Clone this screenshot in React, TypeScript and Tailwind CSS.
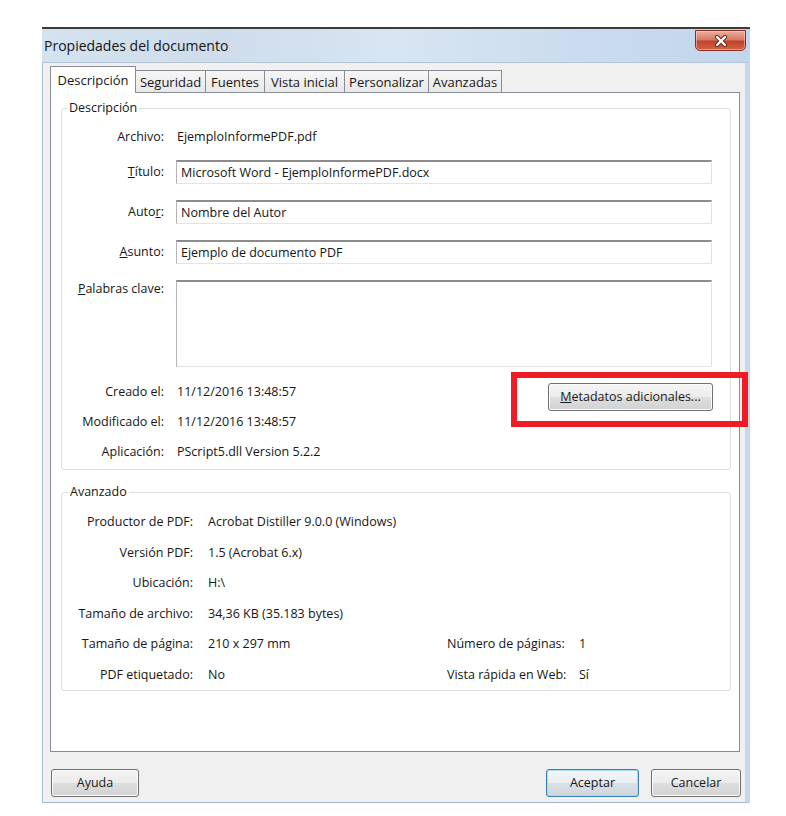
import React from "react";

const btn =
  "h-[28px] rounded-[3px] border border-[#707070] bg-[linear-gradient(to_bottom,#f4f4f4_0%,#ececec_48%,#dedede_52%,#d2d2d2_100%)] shadow-[inset_0_0_0_1px_#fbfbfb] flex items-center justify-center text-[#1a1a1a]";

function TextBox({ children, tall }: { children?: React.ReactNode; tall?: boolean }) {
  return (
    <div
      className={
        "flex-1 mr-[18px] border-t-2 border-t-[#8c8c8c] border-l border-l-[#b4b4b4] border-r border-r-[#e2e2e2] border-b border-b-[#e4e4e4] bg-white pl-[4px] " +
        (tall ? "h-[87px]" : "h-[24px] flex items-center")
      }
    >
      {children}
    </div>
  );
}

function AdvRow({
  label,
  value,
  rLabel,
  rValue,
}: {
  label: string;
  value: string;
  rLabel?: string;
  rValue?: string;
}) {
  return (
    <div className="h-[30.5px] flex items-center">
      <div className="w-[131px] text-right shrink-0">{label}</div>
      <div className="w-[254px] pl-[15px] shrink-0">{value}</div>
      {rLabel && <div className="w-[132px] shrink-0">{rLabel}</div>}
      {rValue && <div>{rValue}</div>}
    </div>
  );
}

export default function App() {
  const tabs = [
    { t: "Seguridad", w: "w-[70px]" },
    { t: "Fuentes", w: "w-[59px]" },
    { t: "Vista inicial", w: "w-[80px]" },
    { t: "Personalizar", w: "w-[84px]" },
    { t: "Avanzadas", w: "w-[73px]" },
  ];
  return (
    <div className="relative w-[786px] h-[816px] bg-white pt-[27px] pl-[42px] overflow-hidden font-['Open_Sans','Noto_Sans',sans-serif] text-[12.5px] leading-[16px] text-[#161616]">
      <div className="w-[708px]">
        {/* Title bar */}
        <div className="h-[35px] border-t-2 border-t-[#3c3c3c] bg-[linear-gradient(to_right,#d5e2ef_0%,#cedcec_25%,#d8e5f2_50%,#cbdcee_75%,#c1d6ec_100%)] flex justify-between items-start">
          <div className="h-[33px] flex items-center pl-[2px] text-[14px] text-[#151515]">
            Propiedades del documento
          </div>
          <div className="mt-[1px] mr-[4px] w-[51px] h-[21px] rounded-b-[5px] border border-[#83301f] bg-[linear-gradient(to_bottom,#eab0a2_0%,#d97a63_45%,#c2432a_55%,#d26247_100%)] shadow-[inset_0_0_0_1px_rgba(255,220,210,0.5)] flex items-center justify-center">
            <svg width="14" height="12" viewBox="0 0 14 12">
              <path d="M3 2 L11 10 M11 2 L3 10" stroke="#6b2418" strokeWidth="4.2" strokeLinecap="round" />
              <path d="M3 2 L11 10 M11 2 L3 10" stroke="#ffffff" strokeWidth="2.4" strokeLinecap="round" />
            </svg>
          </div>
        </div>

        {/* Client */}
        <div className="bg-[#f0f0f0] border-t border-t-[#b3c4d6] border-l border-l-[#a9bfd6] border-r-[5px] border-r-[#c3d7ed] border-b border-b-[#9fb6cf] pb-[5px]">
          {/* Tabs */}
          <div className="flex items-end pl-[7px] pt-[3px] text-[13px]">
            <div className="relative z-10 -mb-px w-[86px] h-[27px] bg-white border border-b-0 border-[#898c95] flex items-center justify-center">
              Descripción
            </div>
            {tabs.map((tb) => (
              <div
                key={tb.t}
                className={
                  tb.w +
                  " h-[22px] border-t border-r border-[#898c95] bg-[linear-gradient(to_bottom,#f6f6f6,#e8e8e8)] flex items-center justify-center"
                }
              >
                {tb.t}
              </div>
            ))}
          </div>

          {/* Panel */}
          <div className="ml-[7px] mr-[5px] h-[660px] border border-[#898c95] bg-white pt-[15px]">
            {/* Group Descripción */}
            <div className="relative ml-[10px] mr-[8px] border border-[#d8dfe5] rounded-[3px] pt-[16px] pb-[2px]">
              <div className="absolute left-[5px] top-[-9px] bg-white px-[2px]">Descripción</div>

              <div className="h-[24px] flex items-center">
                <div className="w-[102px] text-right shrink-0">Archivo:</div>
                <div className="pl-[13px]">EjemploInformePDF.pdf</div>
              </div>

              <div className="mt-[11px] flex items-center">
                <div className="w-[102px] text-right shrink-0 mr-[12px]">
                  <span className="underline">T</span>ítulo:
                </div>
                <TextBox>Microsoft Word - EjemploInformePDF.docx</TextBox>
              </div>

              <div className="mt-[16px] flex items-center">
                <div className="w-[102px] text-right shrink-0 mr-[12px]">
                  Auto<span className="underline">r</span>:
                </div>
                <TextBox>Nombre del Autor</TextBox>
              </div>

              <div className="mt-[16px] flex items-center">
                <div className="w-[102px] text-right shrink-0 mr-[12px]">
                  <span className="underline">A</span>sunto:
                </div>
                <TextBox>Ejemplo de documento PDF</TextBox>
              </div>

              <div className="mt-[16px] flex items-start">
                <div className="w-[102px] text-right shrink-0 mr-[12px] pt-[1px]">
                  <span className="underline">P</span>alabras clave:
                </div>
                <TextBox tall />
              </div>

              <div className="mt-[10px] flex justify-between items-start">
                <div>
                  <div className="h-[30px] flex items-center">
                    <div className="w-[102px] text-right shrink-0">Creado el:</div>
                    <div className="pl-[13px]">11/12/2016 13:48:57</div>
                  </div>
                  <div className="h-[30px] flex items-center">
                    <div className="w-[102px] text-right shrink-0">Modificado el:</div>
                    <div className="pl-[13px]">11/12/2016 13:48:57</div>
                  </div>
                  <div className="h-[30px] flex items-center">
                    <div className="w-[102px] text-right shrink-0">Aplicación:</div>
                    <div className="pl-[13px]">PScript5.dll Version 5.2.2</div>
                  </div>
                </div>
                <div className={btn + " mt-[6px] mr-[17px] w-[165px]"}>
                  <span>
                    <span className="underline">M</span>etadatos adicionales...
                  </span>
                </div>
              </div>
            </div>

            {/* Group Avanzado */}
            <div className="relative mt-[22px] ml-[10px] mr-[8px] border border-[#d8dfe5] rounded-[3px] pt-[14px]">
              <div className="absolute left-[6px] top-[-9px] bg-white px-[2px]">Avanzado</div>
              <AdvRow label="Productor de PDF:" value="Acrobat Distiller 9.0.0 (Windows)" />
              <AdvRow label="Versión PDF:" value="1.5 (Acrobat 6.x)" />
              <AdvRow label="Ubicación:" value="H:\" />
              <AdvRow label="Tamaño de archivo:" value="34,36 KB (35.183 bytes)" />
              <AdvRow label="Tamaño de página:" value="210 x 297 mm" rLabel="Número de páginas:" rValue="1" />
              <AdvRow label="PDF etiquetado:" value="No" rLabel="Vista rápida en Web:" rValue="Sí" />
            </div>
          </div>

          {/* Footer */}
          <div className="mt-[17px] flex items-center pl-[8px] pr-[4px]">
            <div className={btn + " w-[88px]"}>Ayuda</div>
            <div className="flex-1" />
            <div className="h-[28px] w-[93px] rounded-[3px] border border-[#3c7fb1] bg-[linear-gradient(to_bottom,#f2f6f8_0%,#e9eef1_48%,#d9e1e6_52%,#cdd6dc_100%)] shadow-[inset_0_0_0_1px_#a6dcf6] flex items-center justify-center">
              Aceptar
            </div>
            <div className={btn + " w-[90px] ml-[12px]"}>Cancelar</div>
          </div>
        </div>
      </div>

      {/* Red annotation box */}
      <div className="absolute left-[511px] top-[372px] w-[237px] h-[55px] border-[6px] border-[#ee1c25]" />
    </div>
  );
}
